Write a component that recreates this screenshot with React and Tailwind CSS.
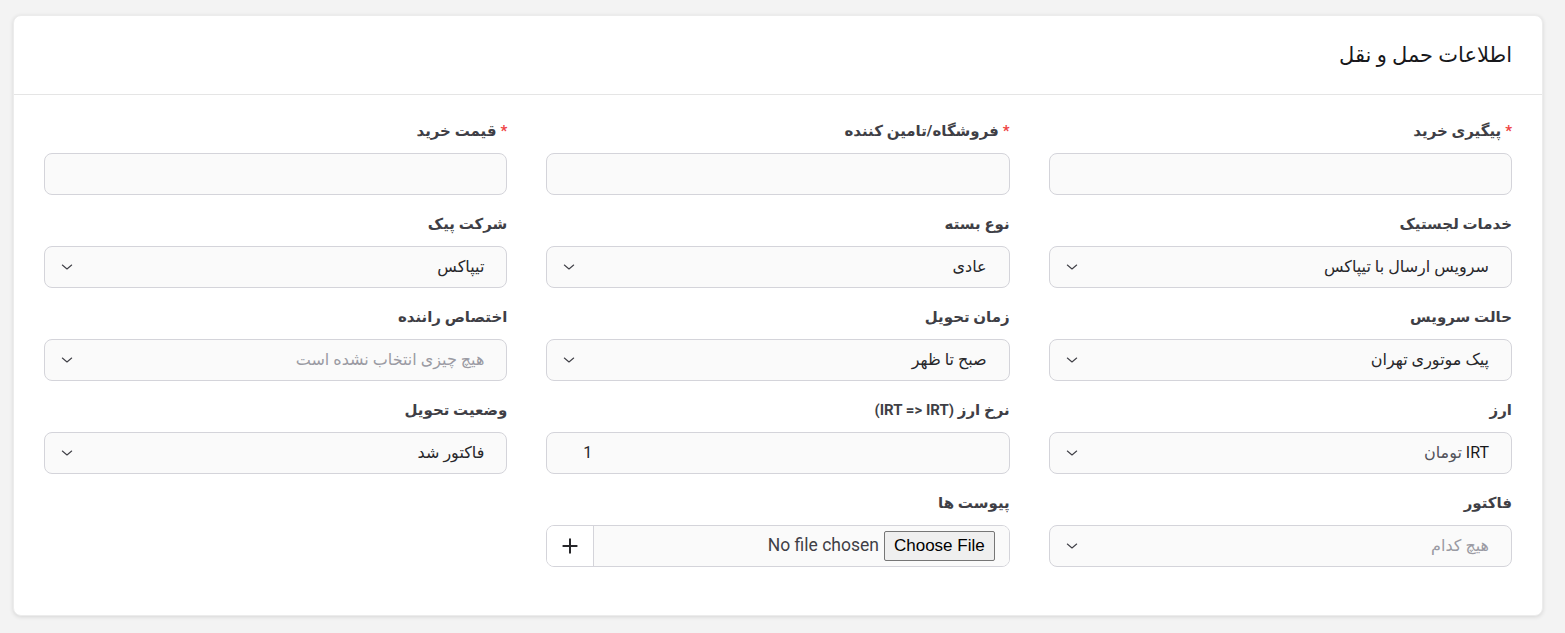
import React from 'react';

const Chevron = () => (
  <svg width="16" height="16" viewBox="0 0 24 24" fill="none" stroke="#3f3f46" strokeWidth="1.6" strokeLinecap="round" strokeLinejoin="round">
    <path d="m5 9 7 6 7-6" />
  </svg>
);

function Label({ children, required }) {
  return (
    <label className="block text-[15px] leading-5 font-bold text-[#3f3f46] mb-3">
      {required && <span className="text-[#ef4444] ml-1">*</span>}
      {children}
    </label>
  );
}

function TextInput() {
  return <input type="text" className="w-full h-[42px] rounded-lg border border-[#d4d4da] bg-[#fafafa] px-5 outline-none" />;
}

function SelectBox({ value, placeholder, latin }) {
  return (
    <div className="w-full h-[42px] rounded-lg border border-[#d4d4da] bg-[#fafafa] pr-[22px] pl-[14px] flex items-center justify-between">
      <span className={`text-[16px] ${placeholder ? 'text-[#9a9aa3]' : latin ? 'text-[#52525b]' : 'text-[#27272a]'}`}>
        {latin && <span className="text-[#18181b]">IRT </span>}
        {value}
      </span>
      <Chevron />
    </div>
  );
}

export default function App() {
  return (
    <div dir="rtl" className="min-h-screen bg-[#f3f3f3] pl-[13px] pr-[22px] pt-[15px] pb-[18px] font-['Roboto','DejaVu_Sans',sans-serif]">
      <div className="bg-white rounded-lg shadow-[0_1px_4px_rgba(0,0,0,0.12)] border border-[#ececec]">
        {/* Header */}
        <div className="h-[79px] flex items-center px-[30px] pt-[2px] border-b border-[#e5e5e5]">
          <h1 className="text-[21px] text-[#18181b]">اطلاعات حمل و نقل</h1>
        </div>

        {/* Body */}
        <div className="px-[30px] pt-[26px] pb-[48px] grid grid-cols-3 gap-x-[39px] gap-y-[19px]">
          <div>
            <Label required>پیگیری خرید</Label>
            <TextInput />
          </div>
          <div>
            <Label required>فروشگاه/تامین کننده</Label>
            <TextInput />
          </div>
          <div>
            <Label required>قیمت خرید</Label>
            <TextInput />
          </div>

          <div>
            <Label>خدمات لجستیک</Label>
            <SelectBox value="سرویس ارسال با تیپاکس" />
          </div>
          <div>
            <Label>نوع بسته</Label>
            <SelectBox value="عادی" />
          </div>
          <div>
            <Label>شرکت پیک</Label>
            <SelectBox value="تیپاکس" />
          </div>

          <div>
            <Label>حالت سرویس</Label>
            <SelectBox value="پیک موتوری تهران" />
          </div>
          <div>
            <Label>زمان تحویل</Label>
            <SelectBox value="صبح تا ظهر" />
          </div>
          <div>
            <Label>اختصاص راننده</Label>
            <SelectBox value="هیچ چیزی انتخاب نشده است" placeholder />
          </div>

          <div>
            <Label>ارز</Label>
            <SelectBox value="تومان" latin />
          </div>
          <div>
            <Label>نرخ ارز (IRT =&gt; IRT)</Label>
            <div dir="ltr" className="w-full h-[42px] rounded-lg border border-[#d4d4da] bg-[#fafafa] pl-9 flex items-center text-[16px] text-[#27272a]">
              1
            </div>
          </div>
          <div>
            <Label>وضعیت تحویل</Label>
            <SelectBox value="فاکتور شد" />
          </div>

          <div>
            <Label>فاکتور</Label>
            <SelectBox value="هیچ کدام" placeholder />
          </div>
          <div>
            <Label>پیوست ها</Label>
            <div className="w-full h-[42px] rounded-lg border border-[#d4d4da] flex overflow-hidden">
              <div className="flex-1 bg-[#fafafa] flex items-center pr-[14px]">
                <input
                  type="file"
                  className="text-[17.5px] text-[#3f3f46] font-['Roboto',sans-serif] file:font-['Liberation_Sans',sans-serif] file:text-black file:text-[17px] file:bg-[#efefef] file:border file:border-[#767676] file:rounded-[2px] file:px-[9px] file:py-[1px] file:ml-[5px]"
                />
              </div>
              <button className="w-[47px] bg-white border-r border-[#d4d4da] flex items-center justify-center">
                <svg width="20" height="20" viewBox="0 0 24 24" fill="none" stroke="#27272a" strokeWidth="2.4" strokeLinecap="round">
                  <path d="M12 4v16M4 12h16" />
                </svg>
              </button>
            </div>
          </div>
          <div />
        </div>
      </div>
    </div>
  );
}
